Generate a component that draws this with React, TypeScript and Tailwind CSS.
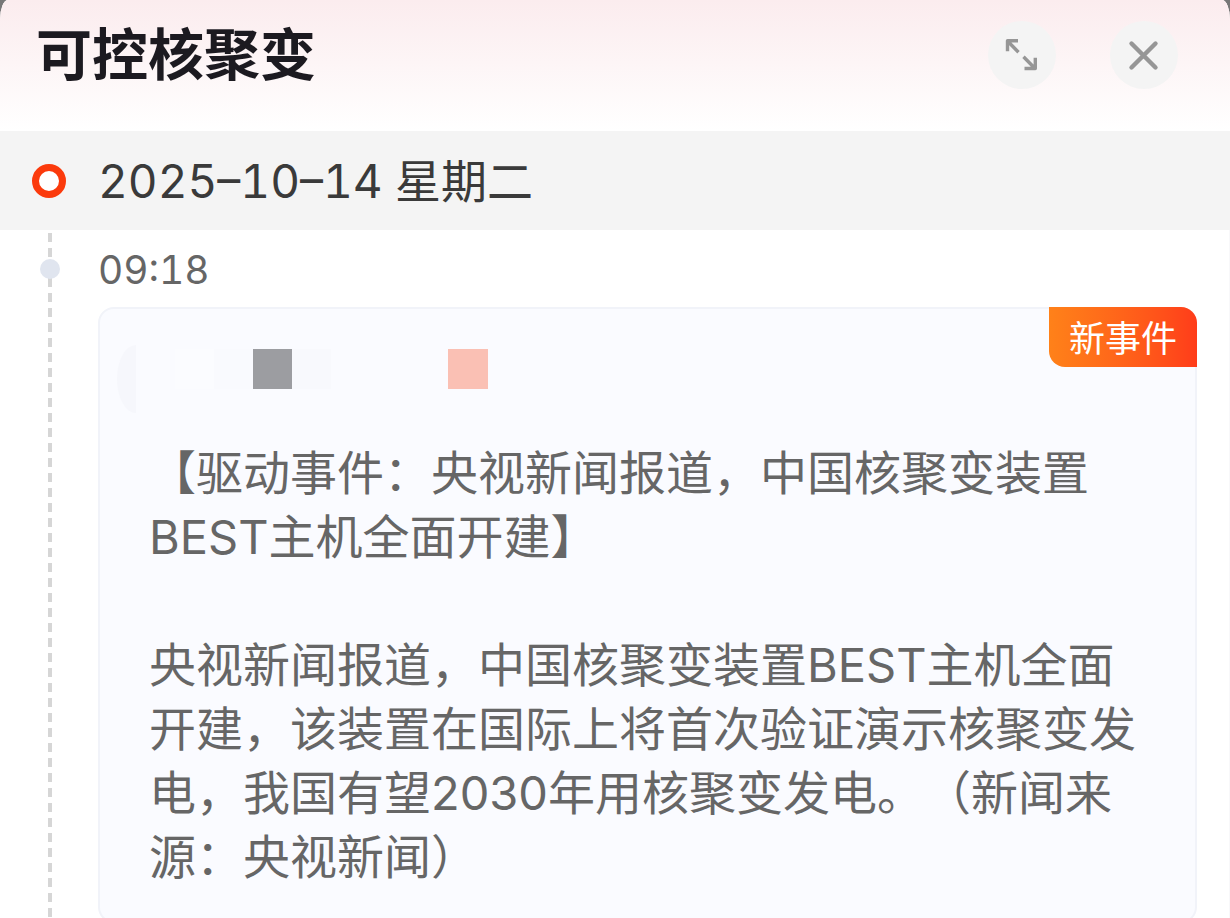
import type { ReactNode } from "react";

const FONT =
  "font-['Inter','Noto_Sans_CJK_SC',sans-serif] [text-spacing-trim:space-all]";

const news = {
  date: "2025–10–14 星期二",
  time: "09:18",
  tag: "新事件",
  title: "【驱动事件：央视新闻报道，中国核聚变装置BEST主机全面开建】",
  content:
    "央视新闻报道，中国核聚变装置BEST主机全面开建，该装置在国际上将首次验证演示核聚变发电，我国有望2030年用核聚变发电。（新闻来源：央视新闻）",
};

function RoundButton({ label, children }: { label: string; children: ReactNode }) {
  return (
    <button
      type="button"
      aria-label={label}
      className="flex size-[68px] items-center justify-center rounded-full bg-[#f4f4f4] text-[#969696]"
    >
      {children}
    </button>
  );
}

function ExpandIcon() {
  return (
    <svg
      className="size-9"
      viewBox="0 0 36 36"
      fill="none"
      stroke="currentColor"
      strokeWidth="3.4"
      strokeLinejoin="round"
    >
      <path d="M14.500 15.200 4 4.500M3.500 14.200V3.800H14" />
      <path d="M19.500 19.800 30.500 31M31.300 20.800V31.500H20.500" />
    </svg>
  );
}

function CloseIcon() {
  return (
    <svg
      className="size-9"
      viewBox="0 0 36 36"
      fill="none"
      stroke="currentColor"
      strokeWidth="4.4"
      strokeLinecap="round"
    >
      <path d="M5.500 6.500l24 24M29.500 6.500l-24 24" />
    </svg>
  );
}

function PanelHeader() {
  return (
    <header className="flex h-[131px] items-start justify-between bg-linear-to-b from-[#fbecee] to-white pt-[21px] pr-[52px] pl-9">
      <h1 className="text-[56px] leading-[68px] font-semibold text-[#1c1a20]">可控核聚变</h1>
      <div className="flex gap-[54px]">
        <RoundButton label="展开">
          <ExpandIcon />
        </RoundButton>
        <RoundButton label="关闭">
          <CloseIcon />
        </RoundButton>
      </div>
    </header>
  );
}

function DateBar() {
  return (
    <div className="flex h-[99px] items-center bg-[#f4f4f4] pl-8">
      <span className="size-[34px] rounded-full border-[7px] border-[#fb3a0c] bg-white" />
      <h2 className="pl-8 text-[46px] leading-[64px] font-normal text-[#3a3a3a] tabular-nums">
        {news.date}
      </h2>
    </div>
  );
}

// pixelated source row above the news text
function MaskedSource() {
  return (
    <div className="flex h-[68px] items-start pl-[17px]" aria-hidden="true">
      <span className="h-[68px] w-[19px] rounded-tl-[19px_34px] rounded-bl-[19px_34px] bg-[#f6f7fc]" />
      <div className="mt-1 flex h-10">
        <span className="w-[39px]" />
        <span className="w-[39px] bg-[#fbfcff]" />
        <span className="w-[39px] bg-[#f9fafe]" />
        <span className="w-[39px] bg-[#9c9da1]" />
        <span className="w-[39px] bg-[#f8f9fd]" />
        <span className="w-[117px]" />
        <span className="w-10 bg-[#fac0b4]" />
      </div>
    </div>
  );
}

function NewsCard() {
  return (
    <article className="relative rounded-2xl border-2 border-[#f1f3f9] bg-[#fafbff] pt-9 pb-8">
      <span className="absolute -top-0.5 -right-0.5 rounded-tr-2xl rounded-bl-2xl bg-linear-to-r from-[#ff8119] to-[#ff3c1a] px-5 pt-1 text-4xl leading-[56px] text-white">
        {news.tag}
      </span>
      <MaskedSource />
      <div className="space-y-16 pt-7 pr-11 pl-[49px] text-[47px] leading-[64px] text-[#666]">
        <p>{news.title}</p>
        <p>{news.content}</p>
      </div>
    </article>
  );
}

function Timeline() {
  return (
    <section className="flex border-r border-[#f8f8fa]">
      <div className="flex w-[98px] shrink-0 pl-12">
        <div className="relative mt-[3px] w-1 bg-[repeating-linear-gradient(to_bottom,#d6d6d6_0_9px,transparent_9px_15px)]">
          <span className="absolute top-[26px] left-1/2 size-5 -translate-x-1/2 rounded-full bg-[#e0e5ef]" />
        </div>
      </div>
      <div className="min-w-0 flex-1 pt-[14px] pr-8">
        <time className="block text-[39px] leading-[52px] text-[#666] tabular-nums">
          {news.time}
        </time>
        <div className="pt-[11px]">
          <NewsCard />
        </div>
      </div>
    </section>
  );
}

export default function App() {
  return (
    <div className="h-screen overflow-hidden bg-[#777]">
      <main
        className={`min-h-full overflow-hidden rounded-tl-[8px_20px] rounded-tr-[8px_20px] bg-white ${FONT}`}
      >
        <PanelHeader />
        <DateBar />
        <Timeline />
      </main>
    </div>
  );
}
